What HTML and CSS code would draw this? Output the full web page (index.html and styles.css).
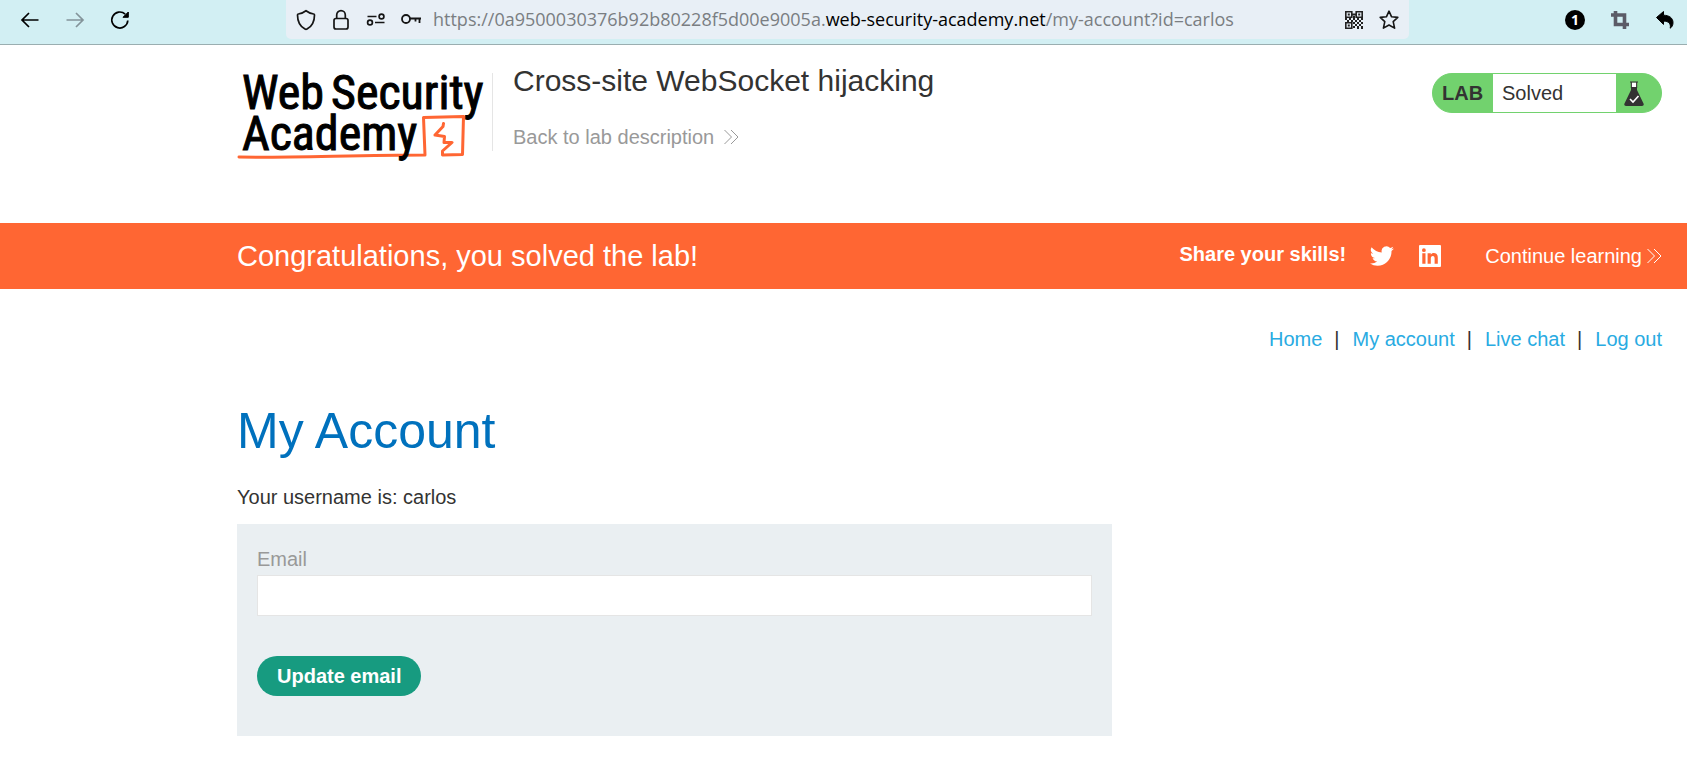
FILE: index.html
```html
<!DOCTYPE html>
<html lang="en">
<head>
<meta charset="utf-8">
<title>Cross-site WebSocket hijacking</title>
<link rel="stylesheet" href="styles.css">
</head>
<body>
<div class="toolbar">
  <div class="tool-group nav-tools">
    <button class="tool" aria-label="Back"><svg width="20" height="20" viewBox="0 0 20 20"><path d="M18.500 10H2M9 3L2 10l7 7" fill="none" stroke="#000" stroke-width="1.700"/></svg></button>
    <button class="tool" aria-label="Forward"><svg width="20" height="20" viewBox="0 0 20 20"><path d="M1.500 10H18M11 3l7 7-7 7" fill="none" stroke="#84949a" stroke-width="1.700"/></svg></button>
    <button class="tool" aria-label="Reload"><svg width="20" height="20" viewBox="0 0 20 20"><path d="M17.800 10.500a8 8 0 1 1-2.600-6.400" fill="none" stroke="#000" stroke-width="1.700"/><path d="M18.300 2v5.300H13z" stroke="#000" stroke-linejoin="round"/></svg></button>
  </div>
  <div class="urlbar">
    <div class="url-icons">
      <svg width="20" height="22" viewBox="0 0 20 22"><path d="M10 1.700c2.500 1.900 5 3 7.700 3.300.6 0 .8.300.8.900 0 6.500-2.700 11.500-7.500 14.200-.7.400-1.300.4-2 0C4.200 17.400 1.500 12.400 1.500 5.900c0-.6.200-.9.800-.9C5 4.700 7.500 3.600 10 1.700z" fill="none" stroke="#151515" stroke-width="1.700" stroke-linejoin="round"/></svg>
      <svg width="20" height="22" viewBox="0 0 20 22"><rect x="3" y="9.500" width="14" height="10.500" rx="2" fill="none" stroke="#151515" stroke-width="1.700"/><path d="M5.700 9.500V6a4.300 4.300 0 0 1 8.600 0v3.500" fill="none" stroke="#151515" stroke-width="1.700"/></svg>
      <svg width="20" height="22" viewBox="0 0 20 22"><path d="M1.500 7.500h9M9 13.500h9.500" stroke="#151515" stroke-width="1.700"/><circle cx="15.500" cy="7.500" r="2.400" fill="none" stroke="#151515" stroke-width="1.700"/><circle cx="4" cy="13.500" r="2.400" fill="none" stroke="#151515" stroke-width="1.700"/></svg>
      <svg width="20" height="22" viewBox="0 0 20 22"><circle cx="5" cy="10" r="4" fill="none" stroke="#151515" stroke-width="1.800"/><path d="M9 9.500h11M14.500 9.500v3M18.500 9.500v4.500" fill="none" stroke="#151515" stroke-width="1.800"/></svg>
    </div>
    <div class="url-text">https://0a9500030376b92b80228f5d00e9005a.<span class="url-host">web-security-academy.net</span>/my-account?id=carlos</div>
    <div class="url-actions">
      <svg width="20" height="20" viewBox="0 0 20 20"><g fill="none" stroke="#222" stroke-width="1.600"><path d="M1.800 1.800h6v5.400h-6zM12.200 1.800h6v5.400h-6zM1.800 12.800h6v5.400h-6z"/></g><path d="M3.800 3.500h2v2h-2zM14.200 3.500h2v2h-2zM3.800 14.500h2v2h-2zM8 3.500h4v2H8zM9 6h2v2H9zM1 8h2v2H1zM5 8h2v2H5zM3 10h2v2H3zM7 10h2v2H7zM9 8h2v2H9zM13 8h2v2h-2zM17 8h2v2h-2zM11 10h2v2h-2zM15 10h2v2h-2zM9 12h2v2H9zM13 12h2v2h-2zM17 12h2v2h-2zM11 14h2v2h-2zM15 14h2v2h-2zM9 16h2v2H9zM13 16h2v3h-2zM17 16h2v3h-2z" fill="#222"/></svg>
      <svg width="20" height="20" viewBox="0 0 20 20"><path d="M10 1.200l2.600 5.600 6.200.6-4.600 4.200 1.400 6.500L10 15l-5.600 3.100 1.400-6.500L1.200 7.400l6.200-.6z" fill="none" stroke="#151515" stroke-width="1.600" stroke-linejoin="round"/></svg>
    </div>
  </div>
  <div class="tool-group ext-tools">
    <button class="tool badge" aria-label="One notification">1</button>
    <button class="tool" aria-label="Crop"><svg width="20" height="20" viewBox="0 0 20 20"><path d="M5.500 1v13.500H19M1 5h13.500v14" fill="none" stroke="#5b5b66" stroke-width="3.600"/></svg></button>
    <button class="tool" aria-label="Undo"><svg width="20" height="20" viewBox="0 0 20 20"><path d="M1.500 7.500L8.500 1.500v3.700c5.800.2 9.500 2.700 9.500 7.500 0 2.300-1 4.400-2.800 5.500.9-4.700-1.500-7-6.700-7.100v3.300z" stroke="#000" stroke-linejoin="round"/></svg></button>
  </div>
</div>

<header class="lab-header">
  <a class="logo" href="#" aria-label="Web Security Academy">
    <svg width="255" height="110" viewBox="0 -10 255 110">
      <g fill="none" stroke="#ff6633" stroke-width="3" stroke-linejoin="round" stroke-linecap="round">
        <path d="M2 87C50 88 120 85 188 85L186.500 47.500l40-1-1 38-20 .5v-4l9.500-8.500h-8l.5-6-9.500-1.500 8-8.500.5-3"/>
      </g>
      <g class="logo-text">
        <text x="5" y="39">Web</text>
        <text x="94" y="39">Security</text>
        <text x="5" y="80">Academy</text>
      </g>
    </svg>
  </a>
  <div class="lab-title">
    <h2>Cross-site WebSocket hijacking</h2>
    <a class="back" href="#">Back to lab description <svg class="chevrons" width="15" height="16" viewBox="0 0 15 16"><path d="M.5 1l7 7-7 7M7 1l7 7-7 7"/></svg></a>
  </div>
  <div class="status">
    <span class="status-tag">LAB</span>
    <span class="status-text">Solved</span>
    <span class="status-icon"><svg width="20" height="26" viewBox="0 0 20 26"><path d="M7 2h6v7l6.500 13.500c.6 1.500 0 2.500-1.500 2.500H2c-1.500 0-2.100-1-1.500-2.500L7 9z" fill="#333332"/><path d="M7.500 1.500h5V6h-5z" fill="#fff"/><path d="M6 1h8M7.300 1v6M12.700 1v6" stroke="#333332"/><path d="M6 18l3 3 5.500-6" fill="none" stroke="#fff" stroke-width="1.600"/></svg></span>
  </div>
</header>

<section class="banner">
  <h4>Congratulations, you solved the lab!</h4>
  <div class="share">
    <span class="share-label">Share your skills!</span>
    <a href="#" aria-label="Twitter"><svg width="24" height="24" viewBox="0 0 24 24"><path d="M23.950 4.600a10 10 0 0 1-2.800.8 5 5 0 0 0 2.100-2.700 10 10 0 0 1-3.100 1.200 4.900 4.900 0 0 0-8.400 4.500A14 14 0 0 1 1.600 3.200a4.900 4.900 0 0 0 1.500 6.500 5 5 0 0 1-2.200-.6v.1a4.900 4.900 0 0 0 3.900 4.800 5 5 0 0 1-2.200.1 4.900 4.900 0 0 0 4.600 3.400A9.900 9.900 0 0 1 0 19.500a14 14 0 0 0 7.500 2.200c9.100 0 14-7.500 14-14v-.6a10 10 0 0 0 2.500-2.500z" fill="#fff"/></svg></a>
    <a href="#" aria-label="LinkedIn"><svg width="24" height="24" viewBox="0 0 24 24"><path fill="#fff" fill-rule="evenodd" d="M2 1h20a1 1 0 0 1 1 1v20a1 1 0 0 1-1 1H2a1 1 0 0 1-1-1V2a1 1 0 0 1 1-1zm2.300 8.300v10.500h3.200V9.300zM5.900 4.300a1.900 1.900 0 1 0 0 3.800 1.900 1.900 0 0 0 0-3.800zM9.600 9.300v10.500h3.200v-5.200c0-1.600.6-2.600 2-2.600s1.800 1 1.800 2.500v5.300h3.200V14c0-3.200-1.200-4.900-3.900-4.900-1.500 0-2.600.7-3.100 1.700V9.300z"/></svg></a>
    <a class="continue" href="#">Continue learning <svg class="chevrons" width="15" height="16" viewBox="0 0 15 16"><path d="M.5 1l7 7-7 7M7 1l7 7-7 7"/></svg></a>
  </div>
</section>

<main class="content">
  <nav class="links">
    <a href="#">Home</a><span>|</span><a href="#">My account</a><span>|</span><a href="#">Live chat</a><span>|</span><a href="#">Log out</a>
  </nav>
  <h1>My Account</h1>
  <p>Your username is: carlos</p>
  <form class="account-form">
    <label for="email">Email</label>
    <input id="email" type="email">
    <button type="button">Update email</button>
  </form>
</main>
</body>
</html>
```
FILE: styles.css
```css
* { box-sizing: border-box; }
body {
  margin: 0;
  background: #fff;
  color: #333332;
  font: 20px/24px "Liberation Sans", Arial, sans-serif;
}
h1, h2, h4, p { margin: 0; font-weight: 400; }
a { color: inherit; text-decoration: none; }
svg { display: block; flex: none; }

.toolbar {
  display: flex;
  height: 45px;
  background: #d2eff3;
  border-bottom: 1px solid #9aaeb0;
}
.tool-group { display: flex; gap: 25px; height: 39px; align-items: center; }
.nav-tools { width: 286px; padding-left: 20px; }
.ext-tools { padding: 0 12px 0 156px; }
.tool { width: 20px; height: 20px; padding: 0; border: 0; background: none; }
.badge {
  border-radius: 10px;
  background: #000;
  color: #fff;
  font: bold 14px/20px "Open Sans", sans-serif;
}
.urlbar {
  flex: 1;
  display: flex;
  align-items: center;
  height: 39px;
  padding: 0 10px;
  border-radius: 0 0 5px 5px;
  background: #e8eff6;
}
.url-icons, .url-actions { display: flex; gap: 15px; }
.url-text {
  flex: 1;
  padding: 0 0 2px 12px;
  color: #7a7e82;
  font: 18px/24px "Open Sans", sans-serif;
  white-space: nowrap;
}
.url-host { color: #000; }

.lab-header {
  display: flex;
  align-items: flex-start;
  height: 178px;
  padding: 0 25px 0 237px;
}
.logo { margin-top: 15px; }
.logo-text {
  fill: #000;
  stroke: #000;
  stroke-width: 1px;
  font: 48px "Liberation Sans Narrow", "Roboto Condensed", "Open Sans Condensed", sans-serif;
}
.lab-title {
  flex: 1;
  height: 78px;
  margin-top: 28px;
  padding-left: 20px;
  border-left: 1px solid #e5e5e5;
}
.lab-title h2 { margin-top: -10px; font-size: 30px; line-height: 36px; }
.back { display: inline-flex; align-items: center; gap: 10px; margin-top: 26px; color: #999; }
.chevrons { fill: none; stroke: currentColor; stroke-width: 1px; }
.status {
  display: flex;
  width: 230px;
  height: 40px;
  margin-top: 28px;
  border: 1px solid #72d26e;
  border-radius: 20px;
  background: #72d26e;
  line-height: 38px;
}
.status-tag { width: 60px; padding-left: 9px; font-weight: 700; }
.status-text { flex: 1; padding-left: 9px; background: #fff; }
.status-icon { width: 45px; padding: 7px 0 0 8px; }

.banner {
  display: flex;
  align-items: center;
  justify-content: space-between;
  height: 66px;
  padding: 0 25px 0 237px;
  background: #ff6633;
  color: #fff;
}
.banner h4 { font-size: 29px; line-height: 36px; }
.share { display: flex; align-items: center; gap: 24px; }
.share-label { padding-bottom: 4px; font-weight: 700; }
.continue { display: flex; align-items: center; gap: 5px; margin-left: 19px; }

.content { padding: 38px 25px 21px 237px; }
.links { display: flex; justify-content: flex-end; gap: 12px; color: #333332; }
.links a { color: #29abe2; }
.links span { padding-right: 1px; }
h1 { margin-top: 50px; color: #0071bd; font-size: 50px; line-height: 60px; }
p { margin-top: 24px; }
.account-form {
  max-width: 875px;
  margin-top: 15px;
  padding: 23px 20px 40px;
  background: #eaeff2;
}
.account-form label { display: block; color: #999; }
.account-form input {
  display: block;
  width: 100%;
  height: 41px;
  margin: 4px 0 40px;
  padding: 0 10px;
  border: 1px solid #e5e5e5;
  background: #fff;
  font: inherit;
}
.account-form button {
  display: block;
  height: 40px;
  padding: 0 20px;
  border: 0;
  border-radius: 20px;
  background: #179b80;
  color: #fff;
  font: bold 20px/40px "Liberation Sans", Arial, sans-serif;
}
```
